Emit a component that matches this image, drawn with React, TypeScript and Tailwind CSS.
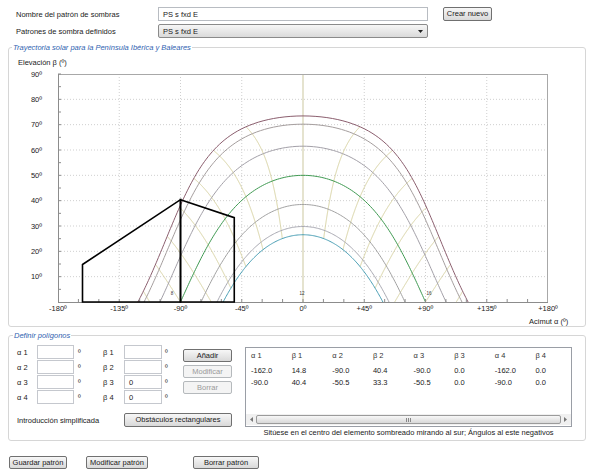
import React from 'react';

// Trayectoria solar para latitud 40º
const LAT = 40;
const rad = Math.PI / 180;
const px = (az: number) => 303 + az * (245 / 180);
const py = (el: number) => 302 - el * (228 / 90);

function sunPos(decl: number, h: number) {
  const phi = LAT * rad;
  const d = decl * rad;
  const H = h * rad;
  const sinEl = Math.sin(phi) * Math.sin(d) + Math.cos(phi) * Math.cos(d) * Math.cos(H);
  const el = Math.asin(sinEl) / rad;
  const az = Math.atan2(Math.sin(H), Math.cos(H) * Math.sin(phi) - Math.tan(d) * Math.cos(phi)) / rad;
  return { az, el };
}

function arcPath(decl: number) {
  const h0 = Math.acos(-Math.tan(LAT * rad) * Math.tan(decl * rad)) / rad;
  const pts: string[] = [];
  for (let i = 0; i <= 160; i++) {
    const h = -h0 + (2 * h0 * i) / 160;
    const p = sunPos(decl, h);
    pts.push(`${px(p.az).toFixed(2)},${py(Math.max(p.el, 0)).toFixed(2)}`);
  }
  return 'M' + pts.join(' L');
}

function hourPath(hour: number) {
  const h = (hour - 12) * 15;
  const pts: string[] = [];
  for (let d = -23.45; d <= 23.46; d += 0.25) {
    const p = sunPos(d, h);
    pts.push(`${px(p.az).toFixed(2)},${py(p.el).toFixed(2)}`);
  }
  return 'M' + pts.join(' L');
}

const arcs = [
  { d: 23.45, c: '#8b5e6e' },
  { d: 20.2, c: '#a59e9e' },
  { d: 11.5, c: '#a3a0a8' },
  { d: 0, c: '#3f9a52' },
  { d: -11.5, c: '#a2a2a2' },
  { d: -20.2, c: '#a9a9b2' },
  { d: -23.45, c: '#4a9fb5' },
];

const hours = [5, 6, 7, 8, 9, 10, 11, 13, 14, 15, 16, 17, 18, 19];

const poly1 = [[-162, 14.8], [-90, 40.4], [-90, 0], [-162, 0]];
const poly2 = [[-90, 40.4], [-50.5, 33.3], [-50.5, 0], [-90, 0]];
const polyPts = (p: number[][]) => p.map(([a, e]) => `${px(a)},${py(e)}`).join(' ');

const xLabels = ['-180º', '-135º', '-90º', '-45º', '0º', '+45º', '+90º', '+135º', '+180º'];

function SunChart() {
  return (
    <svg width={576} height={274} viewBox="9 52 576 274" className="block">
      <defs>
        <clipPath id="plot">
          <rect x={58} y={74} width={490} height={228} />
        </clipPath>
      </defs>
      <text x={18} y={64.5} fontSize={7.5} fill="#1a1a1a">Elevación β (º)</text>

      {/* rejilla */}
      {[10, 20, 30, 40, 50, 60, 70, 80].map((e) => (
        <line key={e} x1={58} x2={548} y1={py(e)} y2={py(e)} stroke="#cfcfcf" strokeDasharray="1 2" />
      ))}
      {[-135, -90, -45, 45, 90, 135].map((a) => (
        <line key={a} x1={px(a)} x2={px(a)} y1={74} y2={302} stroke="#cfcfcf" strokeDasharray="1 2" />
      ))}
      <line x1={303} x2={303} y1={74} y2={302} stroke="#cbc79f" />

      <g clipPath="url(#plot)" fill="none">
        {hours.map((h) => (
          <path key={h} d={hourPath(h)} stroke="#d8d3a2" strokeWidth={1} />
        ))}
        {arcs.map((a) => (
          <path key={a.d} d={arcPath(a.d)} stroke={a.c} strokeWidth={1} />
        ))}
      </g>

      {/* marco y ejes */}
      <line x1={58} x2={548} y1={74.5} y2={74.5} stroke="#a8a8a8" />
      <line x1={547.5} x2={547.5} y1={74} y2={302} stroke="#a8a8a8" />
      <line x1={58.5} x2={58.5} y1={74} y2={302} stroke="#8c8c8c" />
      <line x1={58} x2={548} y1={302.5} y2={302.5} stroke="#8c8c8c" />
      {Array.from({ length: 18 }, (_, i) => (i + 1) * 5).map((e) => (
        <line key={e} x1={58} x2={61} y1={py(e)} y2={py(e)} stroke="#8c8c8c" />
      ))}
      {Array.from({ length: 23 }, (_, i) => -165 + i * 15).map((a) => (
        <line key={a} x1={px(a)} x2={px(a)} y1={302} y2={299} stroke="#8c8c8c" />
      ))}

      {/* obstáculos */}
      <polygon points={polyPts(poly1)} fill="none" stroke="#000" strokeWidth={1.6} strokeLinejoin="miter" />
      <polygon points={polyPts(poly2)} fill="none" stroke="#000" strokeWidth={1.6} strokeLinejoin="miter" />

      {/* etiquetas */}
      {[10, 20, 30, 40, 50, 60, 70, 80, 90].map((e) => (
        <text key={e} x={42} y={py(e) + 2.6} fontSize={7.5} textAnchor="end" fill="#1a1a1a">{e}º</text>
      ))}
      {xLabels.map((l, i) => (
        <text key={l} x={px(-180 + i * 45)} y={310.5} fontSize={7.5} textAnchor="middle" fill="#1a1a1a">{l}</text>
      ))}
      <text x={172} y={294.5} fontSize={4.5} textAnchor="middle" fill="#333">8</text>
      <text x={302} y={294.5} fontSize={4.5} textAnchor="middle" fill="#333">12</text>
      <text x={429} y={294.5} fontSize={4.5} textAnchor="middle" fill="#333">16</text>
      <text x={529} y={323.5} fontSize={7.5} fill="#1a1a1a">Acimut α (º)</text>
    </svg>
  );
}

function Btn({ w, children, disabled }: { w: string; children: React.ReactNode; disabled?: boolean }) {
  return (
    <button
      className={
        disabled
          ? `${w} h-[13px] border border-[#b5b9bc] rounded-[2px] bg-[#f4f4f4] text-[#9a9a9a] flex items-center justify-center leading-none`
          : `${w} h-[13px] border border-[#707070] rounded-[2px] bg-linear-to-b from-[#f7f7f7] to-[#d9d9d9] text-[#1a1a1a] flex items-center justify-center leading-none`
      }
    >
      {children}
    </button>
  );
}

function Field({ value }: { value?: string }) {
  return (
    <div className="w-[37px] h-[14px] border border-[#c5c8ce] bg-white flex items-center pl-[4px]">{value}</div>
  );
}

const rows = [
  { a: 'α 1', b: 'β 1', bv: '' },
  { a: 'α 2', b: 'β 2', bv: '' },
  { a: 'α 3', b: 'β 3', bv: '0' },
  { a: 'α 4', b: 'β 4', bv: '0' },
];

const cols = ['α 1', 'β 1', 'α 2', 'β 2', 'α 3', 'β 3', 'α 4', 'β 4'];
const data = [
  ['-162.0', '14.8', '-90.0', '40.4', '-90.0', '0.0', '-162.0', '0.0'],
  ['-90.0', '40.4', '-50.5', '33.3', '-50.5', '0.0', '-90.0', '0.0'],
];

export default function App() {
  return (
    <div className="w-[600px] h-[471px] overflow-hidden bg-white text-[7.5px] leading-[9px] text-[#1a1a1a] font-['Liberation_Sans',Arial,sans-serif]">
      {/* cabecera */}
      <div className="pl-[16px] pt-[7px] flex flex-col gap-[3px]">
        <div className="flex items-center h-[14px]">
          <span className="w-[142px]">Nombre del patrón de sombras</span>
          <div className="w-[270px] h-[14px] border border-[#b8bcc2] bg-white flex items-center pl-[4px]">PS s fxd E</div>
          <div className="ml-[15px]">
            <Btn w="w-[49px] h-[14px]">Crear nuevo</Btn>
          </div>
        </div>
        <div className="flex items-center h-[14px]">
          <span className="w-[142px]">Patrones de sombra definidos</span>
          <div className="w-[270px] h-[14px] border border-[#8a8a8a] rounded-[2px] bg-linear-to-b from-[#f6f6f6] to-[#dadada] flex items-center justify-between pl-[4px] pr-[4px]">
            <span>PS s fxd E</span>
            <svg width="5" height="3" viewBox="0 0 5 3">
              <path d="M0 0 H5 L2.5 3 Z" fill="#222" />
            </svg>
          </div>
        </div>
      </div>

      {/* trayectoria solar */}
      <fieldset className="ml-[8px] mt-[5px] w-[578px] border border-[#d6d6d6] rounded-[3px]">
        <legend className="ml-[3px] px-[1px] italic text-[#2f62b0] leading-[9px]">Trayectoria solar para la Península Ibérica y Baleares</legend>
        <SunChart />
      </fieldset>

      {/* polígonos */}
      <fieldset className="ml-[8px] mt-[4px] w-[578px] border border-[#d6d6d6] rounded-[3px]">
        <legend className="ml-[4px] px-[1px] italic text-[#2f62b0] leading-[9px]">Definir polígonos</legend>
        <div className="h-[100px] flex pl-[8px] pt-[5px]">
          <div className="flex flex-col w-[215px]">
            <div className="flex">
              <div className="flex flex-col gap-[1px]">
                {rows.map((r) => (
                  <div key={r.a} className="flex items-center h-[14px]">
                    <span className="w-[20px]">{r.a}</span>
                    <Field />
                    <span className="w-[29px] pl-[4px]">º</span>
                    <span className="w-[21px]">{r.b}</span>
                    <div className="w-[38px] h-[14px] border border-[#c5c8ce] bg-white flex items-center pl-[4px]">{r.bv}</div>
                    <span className="w-[21px] pl-[3px]">º</span>
                  </div>
                ))}
              </div>
              <div className="flex flex-col gap-[3px] mt-[4px]">
                <Btn w="w-[49px]">Añadir</Btn>
                <Btn w="w-[49px]" disabled>Modificar</Btn>
                <Btn w="w-[49px]" disabled>Borrar</Btn>
              </div>
            </div>
            <div className="flex items-center mt-[9px] h-[14px]">
              <span className="w-[107px]">Introducción simplificada</span>
              <Btn w="w-[108px] h-[14px]">Obstáculos rectangulares</Btn>
            </div>
          </div>

          <div className="ml-[13px] mt-[2px] w-[327px] flex flex-col items-center">
            <div className="w-[327px] h-[80px] border border-[#9a9ea6] bg-white flex flex-col">
              <div className="grid grid-cols-8 h-[14px] items-center">
                {cols.map((c) => (
                  <span key={c} className="pl-[5px] text-[#333]">{c}</span>
                ))}
              </div>
              <div className="flex flex-col mt-[2px]">
                {data.map((row, i) => (
                  <div key={i} className="grid grid-cols-8 h-[12px] items-center">
                    {row.map((v, j) => (
                      <span key={j} className="pl-[5px] text-[#222]">{v}</span>
                    ))}
                  </div>
                ))}
              </div>
              <div className="mt-auto mb-[1px] h-[11px] flex items-center bg-[#f0f0f0] px-[1px]">
                <div className="w-[9px] flex justify-center">
                  <svg width="3" height="5" viewBox="0 0 3 5"><path d="M3 0 V5 L0 2.5 Z" fill="#777" /></svg>
                </div>
                <div className="flex-1 h-[9px] border border-[#9b9b9b] rounded-[2px] bg-linear-to-b from-[#f8f8f8] to-[#d8d8d8] flex items-center justify-center gap-[1px]">
                  <span className="w-[1px] h-[4px] bg-[#888]" />
                  <span className="w-[1px] h-[4px] bg-[#888]" />
                  <span className="w-[1px] h-[4px] bg-[#888]" />
                </div>
                <div className="w-[9px] flex justify-center">
                  <svg width="3" height="5" viewBox="0 0 3 5"><path d="M0 0 V5 L3 2.5 Z" fill="#777" /></svg>
                </div>
              </div>
            </div>
            <span className="mt-[1px]">Sitúese en el centro del elemento sombreado mirando al sur; Ángulos al este negativos</span>
          </div>
        </div>
      </fieldset>

      {/* botones */}
      <div className="flex pl-[9px] mt-[15px]">
        <Btn w="w-[58px]">Guardar patrón</Btn>
        <div className="ml-[19px]">
          <Btn w="w-[62px]">Modificar patrón</Btn>
        </div>
        <div className="ml-[45px]">
          <Btn w="w-[66px]">Borrar patrón</Btn>
        </div>
      </div>
    </div>
  );
}
